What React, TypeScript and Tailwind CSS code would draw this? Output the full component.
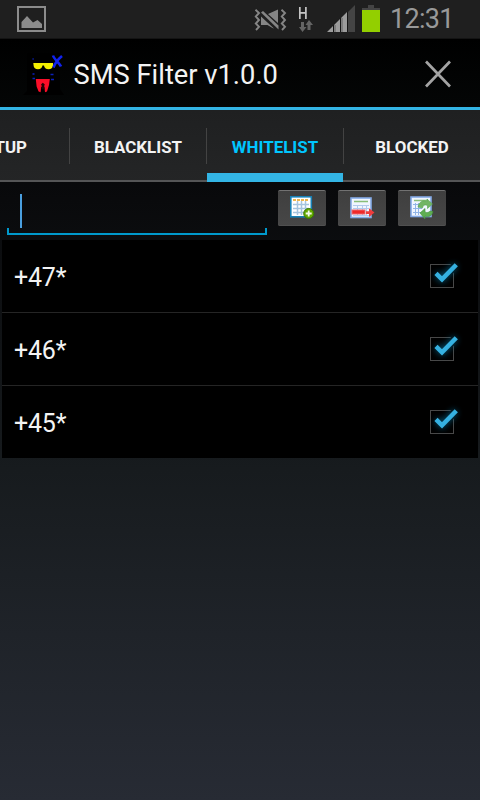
import React from "react";

function StatusBar() {
  return (
    <div className="flex h-[39px] shrink-0 items-start border-b border-[#141414] bg-[#1f1f1f]">
      <svg className="ml-[17px] mt-[6px]" width="29" height="26" viewBox="0 0 29 26">
        <rect x="1" y="1" width="27" height="24" fill="none" stroke="#8c8c8c" strokeWidth="2" />
        <path d="M4.5 22V16L10 10l6 6.500 4.500-2.500 4.500 4v4z" fill="#8c8c8c" />
      </svg>
      <svg className="ml-[208px] mt-[9px]" width="33" height="22" viewBox="0 0 33 22">
        <path d="M1.500 .8L5 4 1.800 7.500 5 11l-3.200 3.500L5 17.800 2 21M27.500 .8L31 4l-3.200 3.500L31 11l-3.200 3.500L31 17.800 28 21" fill="none" stroke="#858585" strokeWidth="1.900" />
        <path d="M7 3.500l2-1.500 15.500 14.500v4z" fill="#858585" />
        <path d="M7 7.500L20 19.500l-1.500-.5-5-3H7zM14 5l10-4.500V14z" fill="#858585" />
      </svg>
      <div className="ml-[11px] mt-[6px] h-[29px] w-[16px]">
        <div className="h-[14px] origin-left scale-x-[.83] text-[16.500px] leading-[15px] font-medium text-[#c4c4c4]">H</div>
        <svg className="ml-[1px]" width="14" height="12" viewBox="0 0 14 12">
          <path d="M2 2h3v5h2.500L3.500 12 0 7h2zM8.500 10h3V5H14L10 0 6.500 5h2z" fill="#646464" />
        </svg>
      </div>
      <svg className="ml-[13px] mt-[5px]" width="28" height="27" viewBox="0 0 28 27">
        <path d="M21 27V7l7-7v27z" fill="#444" />
        <path d="M0 27l6-6v6zM7 27v-7l6-6V27zM14 27V13l6-6v20z" fill="#9c9c9c" />
        <path d="M8 27v-7M15 27V13" stroke="#6d6d6d" strokeWidth="1.300" />
        <path d="M6.500 27v-7M13.500 27V13.500M20.500 27V7" stroke="#161616" strokeWidth="1" />
      </svg>
      <svg className="ml-[7px] mt-[5px]" width="18" height="27" viewBox="0 0 18 27">
        <path d="M6 0h6v3h6v2H0V3h6z" fill="#444" />
        <path d="M0 5h18v22H0z" fill="#93cf00" />
      </svg>
      <div className="ml-[10px] mt-[5px] text-[27px] leading-[28px] tracking-[-0.7px] whitespace-nowrap text-[#999]">12:31</div>
    </div>
  );
}

function AppIcon() {
  return (
    <svg className="ml-[20px] mt-[9px]" width="50" height="50" viewBox="0 0 50 50">
      <path d="M7 43l-4 4h41l-4-6V5H7z" fill="#000" />
      <path d="M13.300 15H33v2.500c0 2.200-2 3.800-4.500 3.800s-4.300-1.500-4.500-3.800h-1.500c-.3 2.300-2 3.800-4.500 3.800s-4.400-1.600-4.400-3.800z" fill="#f4f000" />
      <path d="M15.800 31h14l-.8 6-2 6.500-2 .7-.7-6-1.500 1.500-1.500-1.500-.7 6-2-.7-2-5z" fill="#fa0e28" />
      <path d="M22.800 34.800l2 1.700-.8 1.800.5 3h-3l.5-3-1-1.800z" fill="#250306" />
      <path d="M33 7.500c1 3.500 7 8 8 11M42 8c-3 2.500-7 7-8.500 11.500" stroke="#1022ee" strokeWidth="2.600" fill="none" />
      <path d="M12.500 11h1.200M12.500 26h2M12.500 30.500h2.500M30.500 26.500h3M31 31.500h3" stroke="#0a20bd" strokeWidth="1.500" />
    </svg>
  );
}

function AppBar() {
  return (
    <div className="flex h-[71px] shrink-0 items-start border-b-[3px] border-[#33b5e5] bg-[linear-gradient(#000,#040606)]">
      <AppIcon />
      <h1 className="ml-[3.500px] mt-[20px] w-[229.500px] text-[27.300px] leading-[32px] whitespace-nowrap text-[#f3f3f3]">SMS Filter v1.0.0</h1>
      <svg className="ml-[120px] mt-[21px]" width="30" height="28" viewBox="0 0 30 28">
        <path d="M3 1.500l24 25M27 1.500l-24 25" stroke="#a4a4a4" strokeWidth="2.700" />
      </svg>
    </div>
  );
}

const tabText = "pt-[27px] text-center text-[16.900px] leading-[20px] font-bold whitespace-nowrap";
const divider = "mt-[18px] h-[36px] w-px shrink-0 bg-[#434343]";

function Tabs() {
  return (
    <nav className="flex h-[72px] shrink-0 overflow-hidden bg-[linear-gradient(#1f2021,#242526)]">
      <div className="flex h-[72px] w-[69px] shrink-0 justify-end border-b-2 border-[#545556]">
        <span className={`${tabText} mr-[42px]`}>SETUP</span>
      </div>
      <div className="flex h-[72px] w-px border-b-2 border-[#545556]"><div className={divider} /></div>
      <div className={`${tabText} h-[72px] w-[136px] border-b-2 border-[#545556]`}>BLACKLIST</div>
      <div className="flex h-[72px] w-px border-b-2 border-[#545556]"><div className={divider} /></div>
      <div className={`${tabText} h-[72px] w-[136px] border-b-[9px] border-[#33b5e5] text-[#00c6ff]`}>WHITELIST</div>
      <div className="flex h-[72px] w-px border-b-2 border-[#545556]"><div className={divider} /></div>
      <div className={`${tabText} h-[72px] w-[136px] border-b-2 border-[#545556]`}>BLOCKED</div>
    </nav>
  );
}

function AddIcon() {
  return (
    <svg width="26" height="25" viewBox="0 0 26 25">
      <rect x=".8" y=".8" width="20.500" height="20" fill="#fff" stroke="#1780b5" strokeWidth="1.600" />
      <path d="M3 4h16" stroke="#f0b64e" strokeWidth="2" strokeDasharray="3 1" />
      <path d="M3 8.500h16M3 12.500h16M3 16.500h14M7.500 5v14M11.500 5v14M15.500 5v14" stroke="#a5c4de" strokeWidth="1.500" />
      <circle cx="18.700" cy="17.500" r="5" fill="#62a800" stroke="#397900" />
      <path d="M18.700 14.500v6M15.700 17.500h6" stroke="#f3fae8" strokeWidth="1.800" />
    </svg>
  );
}

function SheetBase() {
  return (
    <>
      <rect x="1" y="1" width="20" height="19.500" fill="#f0f6ff" stroke="#84aae6" strokeWidth="1.600" />
      <path d="M4 4.500h14" stroke="#88be79" strokeWidth="1.500" />
    </>
  );
}

function RemoveIcon() {
  return (
    <svg width="26" height="24" viewBox="0 0 26 24">
      <SheetBase />
      <path d="M3 8.500h16M3 11.500h16M3 18.500h16M7.500 8v11M12.500 8v11M16.500 8v11" stroke="#b1caed" />
      <rect x="2" y="13" width="13" height="4" fill="#ef2929" stroke="#e9646c" />
      <path d="M16 14.200h3v-3l5.500 4.300-5.500 4.500v-3h-3z" fill="#ee3c3c" />
    </svg>
  );
}

function RefreshIcon() {
  return (
    <svg width="26" height="25" viewBox="0 0 26 25">
      <SheetBase />
      <path d="M3 8.500h9M3 12.500h9M3 16.500h9M5.500 7v12M8.500 7v12" stroke="#91b5e7" />
      <path d="M8 11c1-5 5-7.500 9-5.500V3l5.500 5-5 4.500v-3c-3-1.500-4.500 0-5 2.500z" fill="#72b565" stroke="#58a54f" strokeWidth=".6" />
      <path d="M23 15.500c-1 4.500-4.500 6-8 4.500V23l-5-6 5-4.500v3.500c2 1 4 .5 5-1z" fill="#5fae52" stroke="#429238" strokeWidth=".6" />
    </svg>
  );
}

function ActionButton({ children }: { children: React.ReactNode }) {
  return <button className="mr-3 flex h-9 w-12 shrink-0 items-start rounded-[2px] border-t border-[#727272] bg-[linear-gradient(#3f3f3f,#474747)] shadow-[inset_0_-1px_#505050]">{children}</button>;
}

function CheckBox() {
  return (
    <svg width="36" height="36" viewBox="0 0 36 36" className="overflow-visible">
      <rect x="6.500" y="9.500" width="23" height="23" fill="none" stroke="#484848" />
      <path d="M12.500 18.500l5.500 5.500L31.800 10" fill="none" stroke="#000" strokeWidth="8" />
      <path className="blur-[3px]" d="M12.500 18.500l5.500 5.500L31.800 10" fill="none" stroke="#087ba8" strokeWidth="6" opacity=".65" />
      <path d="M12 18.300l6 6L32.300 9.700" fill="none" stroke="#35b1e1" strokeWidth="4.500" />
    </svg>
  );
}

export default function App() {
  return (
    <main className="flex h-[800px] w-[480px] flex-col overflow-hidden bg-[linear-gradient(#000_39px,#090a0c_200px,#171b1e_470px,#272b34_800px)] font-['Roboto',sans-serif] text-[#f3f3f3]">
      <StatusBar />
      <AppBar />
      <Tabs />
      <section className="flex h-[58px] shrink-0">
        <div className="ml-[7px] mr-[11px] mt-[12px] flex h-[41px] w-[260px] flex-col">
          <div className="ml-[13px] h-[34px] w-[2px] bg-[#4a9fdf]" />
          <div className="h-[7px] border-x-2 border-b-2 border-[#0099cc]" />
        </div>
        <div className="flex pt-2">
          <ActionButton><span className="ml-3 mt-[5px]"><AddIcon /></span></ActionButton>
          <ActionButton><span className="ml-3 mt-[6px]"><RemoveIcon /></span></ActionButton>
          <ActionButton><span className="ml-3 mt-[5px]"><RefreshIcon /></span></ActionButton>
        </div>
      </section>
      <ul className="mx-[2px] shrink-0 divide-y divide-[#252525] bg-black">
        {["+47*", "+46*", "+45*"].map((number) => (
          <li key={number} className="box-content flex h-[72px] justify-between">
            <span className="ml-3 mt-[22px] text-[25px] leading-[32px] tracking-[-0.2px]">{number}</span>
            <span className="mr-[18px] mt-[15px]"><CheckBox /></span>
          </li>
        ))}
      </ul>
    </main>
  );
}
